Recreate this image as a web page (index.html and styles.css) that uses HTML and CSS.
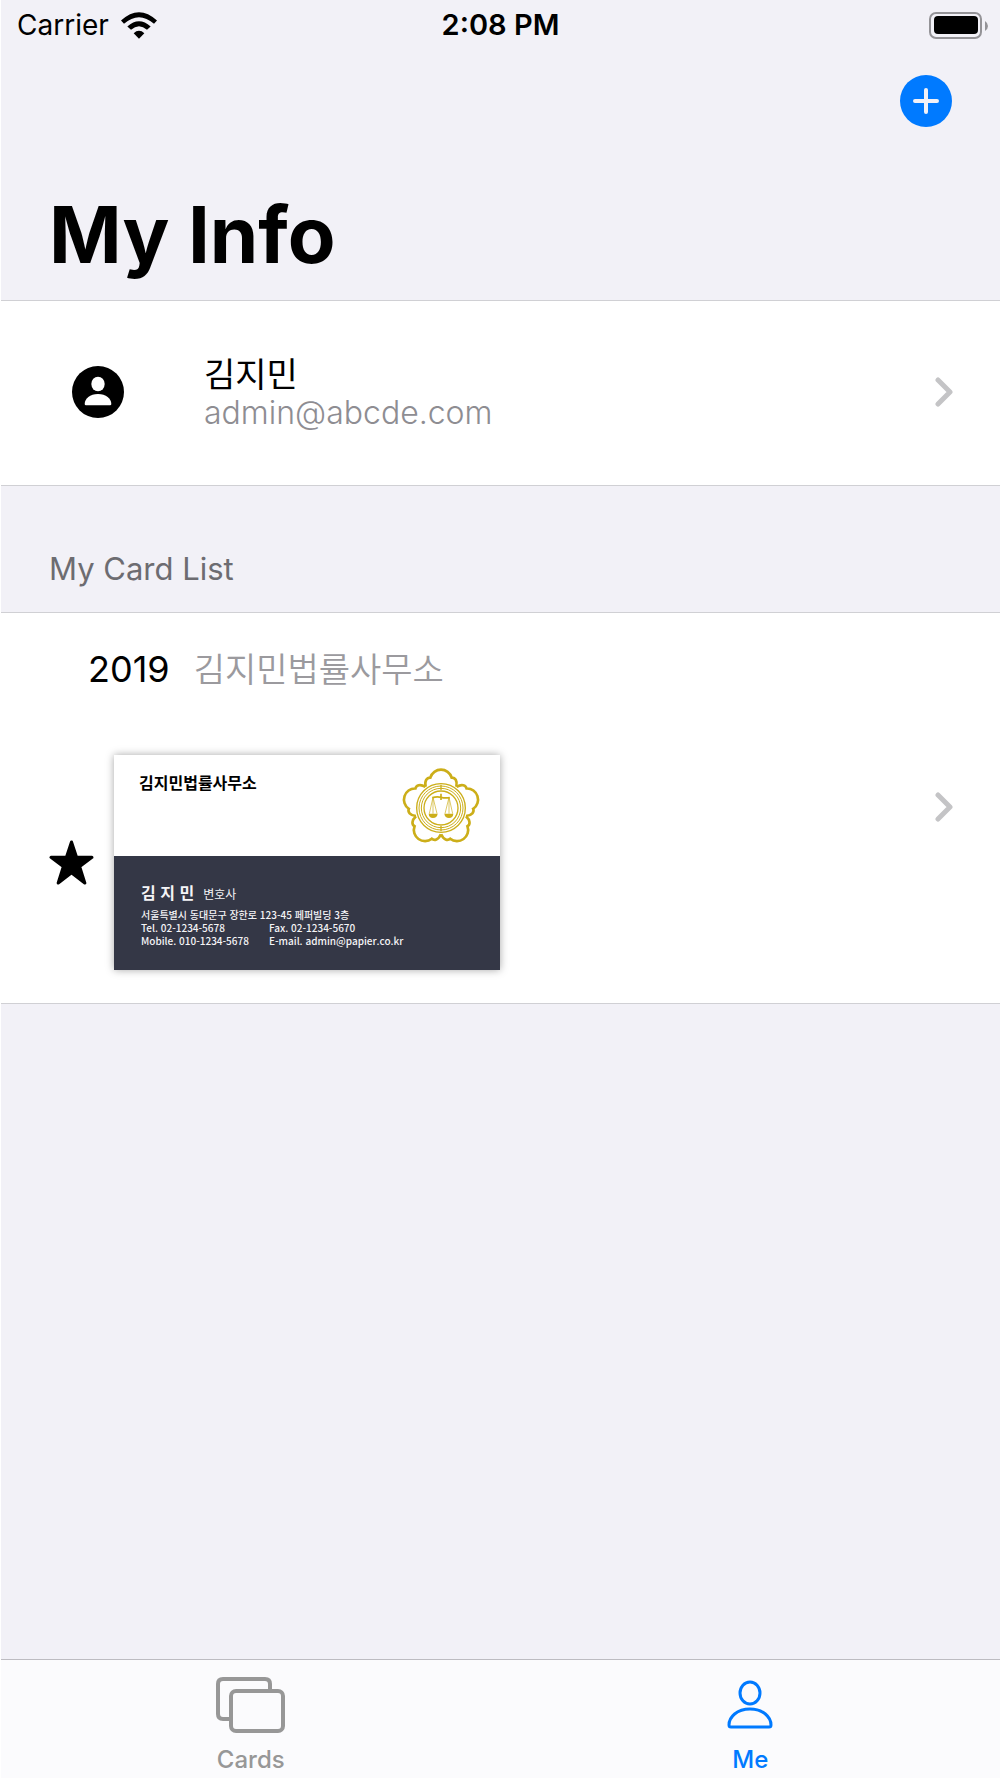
FILE: index.html
```html
<!DOCTYPE html>
<html lang="ko">
<head>
<meta charset="utf-8">
<meta name="viewport" content="width=device-width, initial-scale=1">
<title>My Info</title>
<link rel="stylesheet" href="styles.css">
</head>
<body>
<header class="header">
  <div class="status">
    <div class="status-carrier">
      <span>Carrier</span>
      <svg class="wifi" viewBox="0 0 108 80" aria-hidden="true">
        <path d="M0 25Q54-25 108 25L99 35Q54-5 9 35Z"/>
        <path d="M19 43Q54 11 89 43L78 53Q54 31 30 53Z"/>
        <path d="M38 63Q54 49 70 63L54 80Z"/>
      </svg>
    </div>
    <time class="status-time">2:08 PM</time>
    <svg class="battery" viewBox="0 0 59 27" aria-hidden="true">
      <rect x="1" y="1" width="51" height="25" rx="6" fill="none" stroke="#949397" stroke-width="2"/>
      <rect x="5" y="4" width="44" height="18" rx="4"/>
      <path d="M56 9Q59 11 59 14T56 19Z" fill="#949397"/>
    </svg>
  </div>
  <div class="toolbar">
    <button class="add" type="button" aria-label="Add card">
      <svg viewBox="0 0 52 52" aria-hidden="true"><path d="M26 15V37M15 26H37"/></svg>
    </button>
  </div>
  <h1 class="title">My Info</h1>
</header>

<main class="content">
  <a class="row profile" href="#profile">
    <svg class="avatar" viewBox="0 0 156 156" aria-hidden="true">
      <circle cx="78" cy="78" r="78"/>
      <ellipse cx="78" cy="54" rx="20" ry="22" fill="#fff"/>
      <path d="M38 114C38 98 54 84 78 84S118 98 118 114Q118 118 114 118H42Q38 118 38 114Z" fill="#fff"/>
    </svg>
    <div class="profile-text">
      <div class="profile-name">김지민</div>
      <div class="profile-mail">admin@abcde.com</div>
    </div>
    <svg class="chevron" viewBox="0 0 18 30" aria-hidden="true"><path d="M3 3L15 15L3 27"/></svg>
  </a>

  <h2 class="section-title">My Card List</h2>

  <a class="row card-row" href="#card-2019">
    <div class="card-main">
      <div class="card-heading">
        <span class="card-year">2019</span>
        <span class="card-office">김지민법률사무소</span>
      </div>
      <div class="card-line">
        <svg class="star" viewBox="0 0 44 44" aria-hidden="true"><path d="M22 2L27 17H42L30 26L35 42L22 32L9 42L14 26L2 17H17Z"/></svg>
        <article class="bizcard">
          <div class="bizcard-top">
            <strong class="bizcard-office">김지민법률사무소</strong>
            <svg class="emblem" viewBox="-120 -120 240 240" aria-hidden="true">
              <defs>
                <path id="petal" d="M-46-64C-50-82-42-92-32-91C-28-106-14-115 0-115S28-106 32-91C42-92 50-82 46-64"/>
              </defs>
              <g stroke-width="8">
                <use href="#petal"/>
                <use href="#petal" transform="rotate(72)"/>
                <use href="#petal" transform="rotate(144)"/>
                <use href="#petal" transform="rotate(216)"/>
                <use href="#petal" transform="rotate(288)"/>
              </g>
              <circle r="73" stroke-width="4"/>
              <circle r="66" stroke-width="3"/>
              <circle r="59" stroke-width="3"/>
              <circle r="51" stroke-width="4"/>
              <path d="M0-70V-54M0 70V54" stroke-width="4"/>
              <path d="M-26-31Q-12-35 0-32T26-31M0-43V-24" stroke-width="5"/>
              <path d="M-24-32L-35 17M-24-32L-12 17M-24-32V17M24-32L12 17M24-32L35 17M24-32V17" stroke-width="2"/>
              <path d="M-37 17H-10Q-12 30-24 30T-37 17ZM10 17H37Q36 30 24 30T10 17Z" fill="#ccae19" stroke="none"/>
            </svg>
          </div>
          <div class="bizcard-bottom">
            <div class="bizcard-person"><strong class="bizcard-name">김 지 민</strong><span class="bizcard-job">변호사</span></div>
            <address class="bizcard-contact">
              <span class="wide">서울특별시 동대문구 장한로 123-45 페퍼빌딩 3층</span>
              <span>Tel. 02-1234-5678</span><span>Fax. 02-1234-5670</span>
              <span>Mobile. 010-1234-5678</span><span>E-mail. admin@papier.co.kr</span>
            </address>
          </div>
        </article>
      </div>
    </div>
    <svg class="chevron" viewBox="0 0 18 30" aria-hidden="true"><path d="M3 3L15 15L3 27"/></svg>
  </a>
</main>

<nav class="tabs">
  <a class="tab" href="#cards">
    <svg class="tab-icon" viewBox="0 0 70 56" aria-hidden="true">
      <g stroke-width="4">
        <path d="M54 13V7Q54 2 49 2H7Q2 2 2 7V37Q2 42 7 42H14"/>
        <rect x="15" y="14" width="52" height="40" rx="5"/>
      </g>
    </svg>
    <span>Cards</span>
  </a>
  <a class="tab active" href="#me" aria-current="page">
    <svg class="tab-icon" viewBox="0 0 70 56" aria-hidden="true">
      <ellipse cx="35" cy="16" rx="10" ry="11"/>
      <path d="M14 48C14 40 22 32 35 32S56 40 56 48Q56 50 54 50H16Q14 50 14 48Z"/>
    </svg>
    <span>Me</span>
  </a>
</nav>
</body>
</html>
```
FILE: styles.css
```css
* {
  box-sizing: border-box;
}

body {
  margin: 0;
  min-height: 100vh;
  display: flex;
  flex-direction: column;
  border-left: 1px solid #fff;
  background: #f2f1f7;
  color: #000;
  font-family: Inter, "Noto Sans CJK KR", sans-serif;
}

a {
  color: inherit;
  text-decoration: none;
}

svg {
  display: block;
  flex: none;
}

.status {
  display: grid;
  grid-template-columns: 1fr auto 1fr;
  align-items: center;
  height: 50px;
  padding: 0 12px;
  font-size: 28px;
  line-height: 34px;
}

.status-carrier {
  display: flex;
  align-items: center;
  gap: 12px;
  padding-left: 4px;
}

.wifi {
  width: 36px;
  height: 27px;
}

.status-time {
  font-size: 29px;
  font-weight: 600;
}

.battery {
  width: 59px;
  height: 27px;
  justify-self: end;
}

.toolbar {
  display: flex;
  justify-content: flex-end;
  padding: 25px 48px 0;
}

.add {
  width: 52px;
  height: 52px;
  padding: 0;
  border: 0;
  border-radius: 50%;
  background: #007aff;
}

.add svg {
  fill: none;
  stroke: #f2f1f7;
  stroke-width: 4;
  stroke-linecap: round;
}

.title {
  margin: 60px 0 17px;
  padding: 0 48px;
  font-size: 78px;
  line-height: 96px;
  font-weight: 700;
}

.content {
  flex: 1;
}

.row {
  display: flex;
  align-items: center;
  padding-right: 47px;
  border-top: 1px solid #d0d0d4;
  border-bottom: 1px solid #d0d0d4;
  background: #fff;
}

.chevron {
  width: 18px;
  height: 30px;
  fill: none;
  stroke: #c4c4c6;
  stroke-width: 5;
  stroke-linecap: round;
  stroke-linejoin: round;
}

.profile {
  min-height: 186px;
  padding-bottom: 2px;
  padding-left: 71px;
}

.avatar {
  width: 52px;
  height: 52px;
}

.profile-text {
  flex: 1;
  padding-top: 4px;
  padding-left: 80px;
  line-height: 38px;
}

.profile-name {
  font-size: 34px;
}

.profile-mail {
  color: #8e8d92;
  font-size: 32px;
  font-weight: 300;
}

.section-title {
  margin: 0;
  padding: 63px 48px 23px;
  color: #6d6c71;
  font-size: 31px;
  line-height: 40px;
  font-weight: 400;
}

.card-row {
  padding-top: 36px;
  padding-bottom: 33px;
  padding-left: 48px;
}

.card-main {
  flex: 1;
}

.card-row .chevron {
  margin-bottom: 6px;
}

.card-heading {
  display: flex;
  align-items: baseline;
  gap: 24px;
  height: 40px;
  margin-bottom: 66px;
  padding-left: 39px;
  font-size: 34px;
  line-height: 40px;
}

.card-year {
  font-size: 36px;
}

.card-office {
  color: #9b9a9e;
  font-weight: 350;
}

.card-line {
  display: flex;
  align-items: center;
  gap: 20px;
}

.star {
  width: 45px;
  height: 45px;
  stroke: #000;
  stroke-width: 3;
  stroke-linejoin: round;
}

.bizcard {
  width: 386px;
  box-shadow: 0 0 8px #00000059;
  font-family: "Noto Sans CJK KR", sans-serif;
}

.bizcard-top {
  display: flex;
  justify-content: space-between;
  align-items: flex-start;
  height: 101px;
  padding: 13px 19px 0 25px;
  background: #fff;
}

.bizcard-office {
  padding-top: 2px;
  font-size: 16px;
  line-height: 24px;
}

.emblem {
  width: 80px;
  height: 80px;
  fill: none;
  stroke: #ccae19;
}

.bizcard-bottom {
  height: 114px;
  padding: 24px 12px 0 27px;
  background: #343746;
  color: #f4f4f6;
}

.bizcard-person {
  display: flex;
  align-items: baseline;
  gap: 9px;
  height: 28px;
  line-height: 24px;
}

.bizcard-name {
  font-size: 16px;
}

.bizcard-job {
  font-size: 12px;
}

.bizcard-contact {
  display: grid;
  grid-template-columns: 128px 1fr;
  font-size: 10px;
  line-height: 13px;
  font-style: normal;
  font-weight: 500;
  white-space: nowrap;
}

.wide {
  grid-column: 1 / -1;
}

.tabs {
  display: grid;
  grid-template-columns: 1fr 1fr;
  border-top: 1px solid #bdbcc1;
  background: #fbfbfd;
}

.tab {
  display: flex;
  flex-direction: column;
  align-items: center;
  gap: 12px;
  padding: 17px 0 3px;
  color: #979797;
  font-size: 24px;
  line-height: 30px;
  font-weight: 500;
}

.tab.active {
  color: #007aff;
}

.tab-icon {
  width: 70px;
  height: 56px;
  fill: none;
  stroke: currentColor;
  stroke-width: 3;
}
```
